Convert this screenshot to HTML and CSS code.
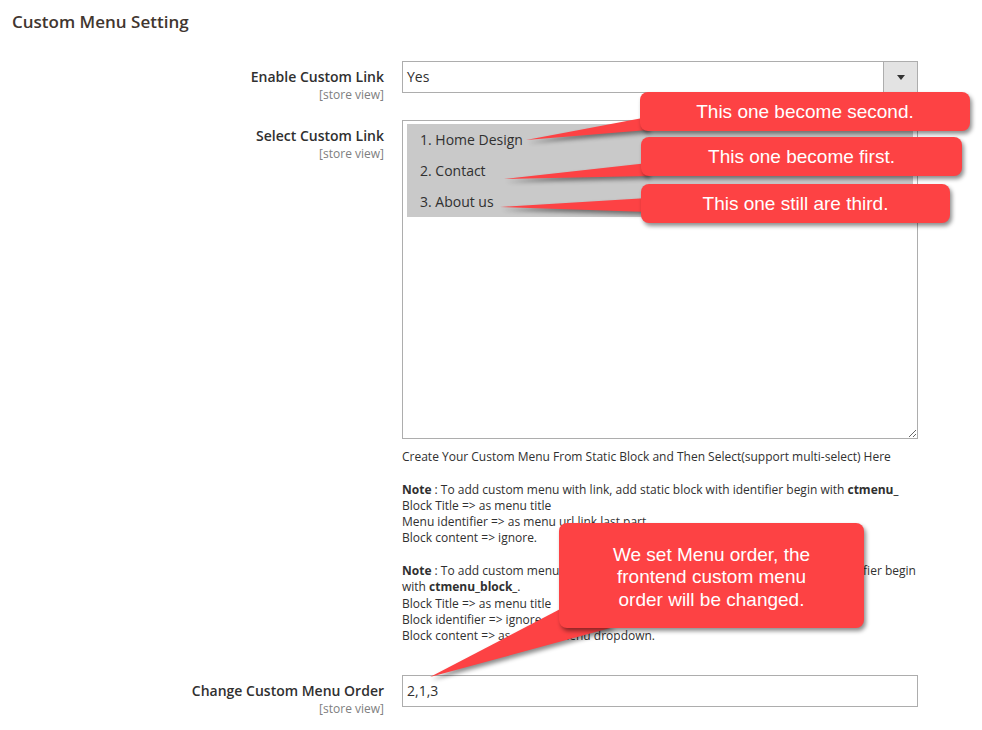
FILE: index.html
```html
<!DOCTYPE html>
<html lang="en">
<head>
<meta charset="utf-8">
<title>Custom Menu Setting</title>
<link rel="stylesheet" href="styles.css">
</head>
<body>
<div class="page">
  <h2 class="title">Custom Menu Setting</h2>
  <div class="form">
    <div class="row">
      <div class="label"><span class="name">Enable Custom Link</span><span class="scope">[store view]</span></div>
      <div class="control">
        <div class="select"><span class="value">Yes</span><span class="arrow-btn"><span class="arrow"></span></span></div>
      </div>
    </div>
    <div class="row">
      <div class="label"><span class="name">Select Custom Link</span><span class="scope">[store view]</span></div>
      <div class="control">
        <div class="multi">
          <div class="opt">1. Home Design</div>
          <div class="opt">2. Contact</div>
          <div class="opt">3. About us</div>
        </div>
        <div class="note">
          <p>Create Your Custom Menu From Static Block and Then Select(support multi-select) Here</p>
          <p><b>Note</b> : To add custom menu with link, add static block with identifier begin with <b>ctmenu_</b><br>Block Title =&gt; as menu title<br>Menu identifier =&gt; as menu url link last part<br>Block content =&gt; ignore.</p>
          <p><b>Note</b> : To add custom menu with a static block content, add static block with identifier begin<br>with <b>ctmenu_block_</b>.<br>Block Title =&gt; as menu title<br>Block identifier =&gt; ignore<br>Block content =&gt; as custom menu dropdown.</p>
        </div>
      </div>
    </div>
    <div class="row">
      <div class="label"><span class="name">Change Custom Menu Order</span><span class="scope">[store view]</span></div>
      <div class="control">
        <div class="input">2,1,3</div>
      </div>
    </div>
  </div>

  <svg class="tails" viewBox="0 0 982 730" width="982" height="730" aria-hidden="true">
    <polygon points="526,140 648,117 648,130"/>
    <polygon points="504,179 648,163 648,176"/>
    <polygon points="500,207 648,198 648,212"/>
    <polygon points="430,677 566,606 614,627"/>
  </svg>
  <div class="callout c1">This one become second.</div>
  <div class="callout c2">This one become first.</div>
  <div class="callout c3">This one still are third.</div>
  <div class="callout c4">We set Menu order, the<br>frontend custom menu<br>order will be changed.</div>
</div>
</body>
</html>
```
FILE: styles.css
```css
html, body {
  margin: 0;
  padding: 0;
  background: #ffffff;
}

.page {
  position: relative;
  width: 982px;
  height: 730px;
  overflow: hidden;
  font-family: "Open Sans", "Noto Sans", sans-serif;
  color: #303030;
}

.title {
  margin: 0;
  padding: 10px 0 0 12px;
  font-size: 17px;
  line-height: 23px;
  font-weight: 600;
  color: #41362f;
}

.form {
  margin-top: 28px;
}

.row {
  display: grid;
  grid-template-columns: 384px 516px;
  column-gap: 18px;
  align-items: start;
  margin-bottom: 17px;
}

.label {
  text-align: right;
  padding-top: 6px;
}

.label .name {
  display: block;
  font-size: 14px;
  line-height: 20px;
  font-weight: 600;
  color: #303030;
}

.label .scope {
  display: block;
  font-size: 12px;
  line-height: 16px;
  color: #808080;
}

.select {
  display: flex;
  height: 32px;
  box-sizing: border-box;
  border: 1px solid #adadad;
  background: #fff;
}

.select .value {
  flex: 1;
  padding-left: 4px;
  font-size: 14px;
  line-height: 30px;
}

.arrow-btn {
  width: 33px;
  display: flex;
  align-items: center;
  justify-content: center;
  background: #e3e3e3;
  border-left: 1px solid #adadad;
}

.arrow {
  width: 0;
  height: 0;
  border-left: 4px solid transparent;
  border-right: 4px solid transparent;
  border-top: 5px solid #333;
}

.multi {
  height: 319px;
  box-sizing: border-box;
  border: 1px solid #adadad;
  padding: 3px 4px;
  resize: vertical;
  overflow: auto;
  background: #fff;
}

.opt {
  height: 31px;
  line-height: 31px;
  padding-left: 13px;
  background: #c9c9c9;
  font-size: 14px;
  color: #303030;
}

.note {
  margin-top: 10px;
  padding-bottom: 13px;
  font-size: 12px;
  line-height: 16.3px;
}

.note p {
  margin: 0 0 16.3px;
}

.note p:last-child {
  margin-bottom: 0;
}

.input {
  height: 32px;
  box-sizing: border-box;
  border: 1px solid #adadad;
  padding: 0 4px;
  font-size: 14px;
  line-height: 30px;
}

.tails {
  position: absolute;
  left: 0;
  top: 0;
  fill: #fd4244;
  filter: drop-shadow(2px 3px 2px rgba(0, 0, 0, 0.45));
  pointer-events: none;
}

.callout {
  position: absolute;
  box-sizing: border-box;
  display: flex;
  align-items: center;
  justify-content: center;
  text-align: center;
  background: #fd4244;
  color: #fff;
  border-radius: 8px;
  box-shadow: 2px 3px 4px rgba(0, 0, 0, 0.45);
  font-family: "Liberation Sans", Arial, sans-serif;
  font-size: 19px;
  line-height: 22px;
}

.c1 { left: 640px; top: 92px; width: 330px; height: 39px; }
.c2 { left: 641px; top: 137px; width: 321px; height: 39px; }
.c3 { left: 641px; top: 184px; width: 309px; height: 39px; }
.c4 { left: 559px; top: 523px; width: 305px; height: 105px; line-height: 22.5px; padding-top: 4px; }
```
